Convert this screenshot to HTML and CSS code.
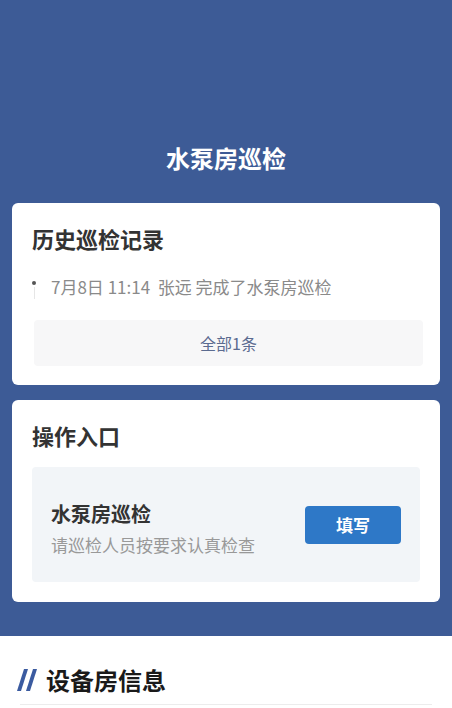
FILE: index.html
```html
<!DOCTYPE html>
<html lang="zh">
<head>
<meta charset="utf-8">
<link rel="stylesheet" href="styles.css">
</head>
<body>
<div class="header">
  <div class="page-title">水泵房巡检</div>
  <div class="card card-history">
    <div class="card-title">历史巡检记录</div>
    <div class="timeline">
      <div class="tl-mark"><span class="tl-dot"></span><span class="tl-line"></span></div>
      <div class="tl-text">7月8日 11:14&nbsp; 张远 完成了水泵房巡检</div>
    </div>
    <div class="all-btn">全部1条</div>
  </div>
  <div class="card card-ops">
    <div class="card-title">操作入口</div>
    <div class="op-box">
      <div class="op-text">
        <div class="op-name">水泵房巡检</div>
        <div class="op-desc">请巡检人员按要求认真检查</div>
      </div>
      <div class="op-btn">填写</div>
    </div>
  </div>
</div>
<div class="section">
  <div class="section-head">
    <svg class="slashes" width="22" height="24" viewBox="0 0 22 24">
      <polygon points="8,1 12,1 5,23 1,23" fill="#3b5ba0"/>
      <polygon points="17,1 21,1 14,23 10,23" fill="#3b5ba0"/>
    </svg>
    <span class="section-title">设备房信息</span>
  </div>
  <div class="section-line"></div>
</div>
</body>
</html>
```
FILE: styles.css
```css
html, body {
  margin: 0;
  padding: 0;
  background: #ffffff;
  font-family: "Noto Sans CJK SC", "Noto Sans", sans-serif;
}
.header {
  background: #3d5b96;
  padding: 142px 12px 34px;
}
.page-title {
  color: #ffffff;
  font-size: 24px;
  font-weight: 700;
  line-height: 32px;
  text-align: center;
}
.card {
  background: #ffffff;
  border-radius: 6px;
  padding: 20px 20px 19px 20px;
}
.card-history {
  margin-top: 29px;
  padding-right: 17px;
}
.card-ops {
  margin-top: 15px;
  padding-bottom: 20px;
}
.card-title {
  font-size: 22px;
  font-weight: 700;
  line-height: 30px;
  color: #333333;
}
.timeline {
  margin-top: 22px;
  height: 24px;
  display: flex;
  align-items: flex-start;
}
.tl-mark {
  width: 19px;
  display: flex;
  flex-direction: column;
  align-items: flex-start;
  padding-top: 6px;
}
.tl-dot {
  width: 4px;
  height: 4px;
  border-radius: 50%;
  background: #555555;
}
.tl-line {
  width: 1px;
  height: 12px;
  background: #e6e6e6;
  margin-left: 1.5px;
  margin-top: 2px;
}
.tl-text {
  font-size: 17px;
  line-height: 24px;
  color: #8a8a8a;
}
.all-btn {
  margin: 21px 0 0 2px;
  height: 46px;
  line-height: 46px;
  background: #f7f7f8;
  border-radius: 4px;
  text-align: center;
  font-size: 16px;
  color: #5b6b90;
}
.op-box {
  margin-top: 17px;
  height: 115px;
  box-sizing: border-box;
  background: #f2f5f8;
  border-radius: 4px;
  padding: 33px 19px 0;
  display: flex;
  align-items: flex-start;
  justify-content: space-between;
}
.op-name {
  font-size: 20px;
  font-weight: 700;
  line-height: 28px;
  color: #333333;
}
.op-desc {
  margin-top: 5px;
  font-size: 17px;
  line-height: 24px;
  color: #999999;
}
.op-btn {
  width: 96px;
  height: 38px;
  line-height: 38px;
  background: #2e78c7;
  border-radius: 4px;
  color: #ffffff;
  font-size: 17px;
  font-weight: 700;
  text-align: center;
  margin-top: 6px;
}
.section {
  padding: 28px 20px 0 16px;
}
.section-head {
  display: flex;
  align-items: center;
  gap: 8px;
  height: 32px;
}
.section-title {
  font-size: 24px;
  font-weight: 700;
  line-height: 32px;
  color: #1a1a1a;
}
.section-line {
  margin: 8px 0 0 4px;
  height: 1px;
  background: #ececec;
}
```
